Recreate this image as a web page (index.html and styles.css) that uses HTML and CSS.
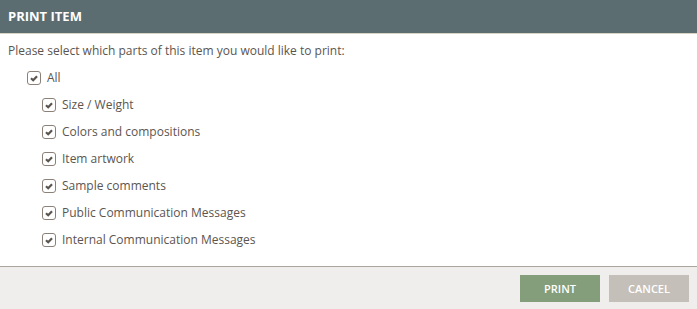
FILE: index.html
```html
<!DOCTYPE html>
<html lang="en">
<head>
  <meta charset="UTF-8">
  <title>Print Item</title>
  <link rel="stylesheet" href="styles.css">
</head>
<body>
  <div class="dialog">
    <div class="dialog-header">PRINT ITEM</div>
    <div class="dialog-body">
      <p class="intro">Please select which parts of this item you would like to print:</p>
      <ul class="options">
        <li class="option"><span class="check"><svg viewBox="0 0 10 10"><path d="M2 5.2 L4.2 7.2 L8 3.2" /></svg></span>All</li>
        <li class="option child"><span class="check"><svg viewBox="0 0 10 10"><path d="M2 5.2 L4.2 7.2 L8 3.2" /></svg></span>Size / Weight</li>
        <li class="option child"><span class="check"><svg viewBox="0 0 10 10"><path d="M2 5.2 L4.2 7.2 L8 3.2" /></svg></span>Colors and compositions</li>
        <li class="option child"><span class="check"><svg viewBox="0 0 10 10"><path d="M2 5.2 L4.2 7.2 L8 3.2" /></svg></span>Item artwork</li>
        <li class="option child"><span class="check"><svg viewBox="0 0 10 10"><path d="M2 5.2 L4.2 7.2 L8 3.2" /></svg></span>Sample comments</li>
        <li class="option child"><span class="check"><svg viewBox="0 0 10 10"><path d="M2 5.2 L4.2 7.2 L8 3.2" /></svg></span>Public Communication Messages</li>
        <li class="option child"><span class="check"><svg viewBox="0 0 10 10"><path d="M2 5.2 L4.2 7.2 L8 3.2" /></svg></span>Internal Communication Messages</li>
      </ul>
    </div>
    <div class="dialog-footer">
      <button class="btn btn-print">PRINT</button>
      <button class="btn btn-cancel">CANCEL</button>
    </div>
  </div>
</body>
</html>
```

FILE: styles.css
```css
* {
  margin: 0;
  padding: 0;
  box-sizing: border-box;
}

body {
  font-family: 'Open Sans', sans-serif;
  background-color: #fff;
  color: #5b5550;
}

.dialog {
  width: 697px;
  height: 309px;
  display: flex;
  flex-direction: column;
}

.dialog-header {
  height: 34px;
  background-color: #5b6d71;
  border-bottom: 1px solid #d9d3c6;
  color: #fff;
  font-weight: bold;
  font-size: 13px;
  padding: 7px 8px 0;
}

.dialog-body {
  flex: 1;
  padding: 8px 8px 0;
}

.intro {
  font-size: 12px;
  line-height: 17px;
  margin-bottom: 5px;
}

.options {
  list-style: none;
}

.option {
  display: flex;
  align-items: center;
  gap: 6px;
  height: 27px;
  font-size: 12px;
  padding-left: 19px;
}

.option.child {
  padding-left: 34px;
}

.check {
  width: 14px;
  height: 14px;
  border: 1px solid #8c8179;
  border-radius: 3px;
  display: flex;
  align-items: center;
  justify-content: center;
}

.check svg {
  width: 10px;
  height: 10px;
}

.check path {
  fill: none;
  stroke: #5b5550;
  stroke-width: 2.2;
}

.dialog-footer {
  height: 43px;
  background-color: #efeeec;
  border-top: 1px solid #aaa69e;
  display: flex;
  justify-content: flex-end;
  align-items: center;
  gap: 9px;
  padding-right: 8px;
}

.btn {
  width: 80px;
  height: 27px;
  border: none;
  color: #fff;
  font-family: 'Open Sans', sans-serif;
  font-size: 11px;
  font-weight: 600;
}

.btn-print {
  background-color: #849d7b;
}

.btn-cancel {
  background-color: #c4bfb8;
}
```
